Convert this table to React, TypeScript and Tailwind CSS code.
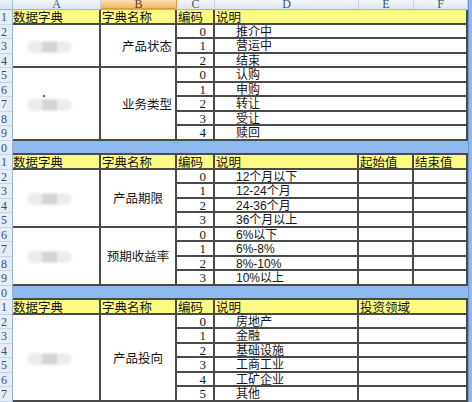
import React from 'react';

// Excel-like data dictionary sheet, cropped on the left

type Split = 'one' | 'two' | 'three';

type Group = {
  name: string;
  align: 'right' | 'center';
  blob: 'plain' | 'mark';
  items: string[];
};

type Section = {
  split: Split;
  groups: Group[];
};

const sections: Section[] = [
  {
    split: 'one',
    groups: [
      { name: '产品状态', align: 'right', blob: 'plain', items: ['推介中', '营运中', '结束'] },
      { name: '业务类型', align: 'right', blob: 'mark', items: ['认购', '申购', '转让', '受让', '赎回'] },
    ],
  },
  {
    split: 'three',
    groups: [
      { name: '产品期限', align: 'center', blob: 'plain', items: ['12个月以下', '12-24个月', '24-36个月', '36个月以上'] },
      { name: '预期收益率', align: 'center', blob: 'plain', items: ['6%以下', '6%-8%', '8%-10%', '10%以上'] },
    ],
  },
  {
    split: 'two',
    groups: [
      { name: '产品投向', align: 'center', blob: 'plain', items: ['房地产', '金融', '基础设施', '工商工业', '工矿企业', '其他'] },
    ],
  },
];

const cols = [
  { id: 'A', w: 'w-[88px]' },
  { id: 'B', w: 'w-[76px]' },
  { id: 'C', w: 'w-[38px]' },
  { id: 'D', w: 'w-[144px]' },
  { id: 'E', w: 'w-[55px]' },
  { id: 'F', w: 'w-[54px]' },
];

function ColumnHeader() {
  return (
    <div className="flex h-[10px] overflow-hidden border-b border-[#9fb5cf]">
      <div className="w-[13px] bg-gradient-to-b from-[#eef2f8] to-[#d8e2ef] border-r border-[#a9bdd6]" />
      {cols.map((c) => (
        <div
          key={c.id}
          className={`${c.w} flex justify-center overflow-hidden border-r border-[#c3d1e2] font-['Liberation_Serif',serif] text-[12px] leading-[8px] ${
            c.id === 'B'
              ? 'bg-gradient-to-b from-[#fbe0b0] to-[#f2b765] text-[#5a4020] border-b border-[#e39a3a]'
              : 'bg-gradient-to-b from-[#f4f7fb] to-[#dde6f2] text-[#3d5275]'
          }`}
        >
          {c.id}
        </div>
      ))}
    </div>
  );
}

function RowNumbers() {
  const nums = Array.from({ length: 27 }, (_, i) => (i + 1) % 10);
  return (
    <div className="w-[13px] flex flex-col border-r border-[#9fb5cf] bg-[#e6edf7]">
      {nums.map((n, i) => (
        <div
          key={i}
          className="h-[14.5px] border-b border-[#c6d4e6] overflow-hidden font-['Liberation_Serif',serif] text-[12px] leading-[14px] text-[#34507a] pl-[1px]"
        >
          {n}
        </div>
      ))}
    </div>
  );
}

function Blob({ mark }: { mark: boolean }) {
  return (
    <div className="relative w-[45px] h-[12px] ml-[14px] mt-[3px]">
      <div className="absolute inset-0 rounded-full bg-[#ececec] blur-[1.5px]" />
      <div className="absolute left-[15px] top-[1px] w-[15px] h-[10px] bg-[#d4d4d4] blur-[1px]" />
      {mark && <div className="absolute left-[16px] -top-[4px] w-[2px] h-[2px] rotate-45 bg-[#444] blur-[0.4px]" />}
    </div>
  );
}

function HeaderRow({ split }: { split: Split }) {
  const cell = 'h-full border-r-2 border-[#4a4a4a] pl-[1px] leading-[13px] overflow-hidden whitespace-nowrap';
  return (
    <div className="flex h-[14.5px] bg-[#fcfc84] border-b-2 border-[#4a4a4a] text-[12.5px]">
      <div className="w-[88px] h-full border-r-2 border-[#4a4a4a] leading-[13px]">数据字典</div>
      <div className={`w-[76px] ${cell}`}>字典名称</div>
      <div className={`w-[38px] ${cell}`}>编码</div>
      {split === 'one' && <div className={`w-[253px] ${cell}`}>说明</div>}
      {split !== 'one' && <div className={`w-[144px] ${cell}`}>说明</div>}
      {split === 'two' && <div className={`w-[109px] ${cell}`}>投资领域</div>}
      {split === 'three' && (
        <>
          <div className={`w-[55px] ${cell}`}>起始值</div>
          <div className={`w-[54px] ${cell}`}>结束值</div>
        </>
      )}
    </div>
  );
}

function DataRow({ code, text, split }: { code: number; text: string; split: Split }) {
  const cell = 'h-full border-r-2 border-b-2 border-[#4a4a4a]';
  return (
    <div className="flex h-[14.5px]">
      <div className={`w-[38px] ${cell} text-right pr-[7px] font-['Liberation_Serif',serif] text-[13px] leading-[13px]`}>
        {code}
      </div>
      <div
        className={`${split === 'one' ? 'w-[253px]' : 'w-[144px]'} ${cell} pl-[21px] font-['Liberation_Sans','Noto_Sans_CJK_SC',sans-serif] text-[12px] leading-[14px] whitespace-nowrap overflow-hidden`}
      >
        {text}
      </div>
      {split === 'two' && <div className={`w-[109px] ${cell}`} />}
      {split === 'three' && (
        <>
          <div className={`w-[55px] ${cell}`} />
          <div className={`w-[54px] ${cell}`} />
        </>
      )}
    </div>
  );
}

function GroupBlock({ group, split }: { group: Group; split: Split }) {
  return (
    <div className="flex">
      <div className="w-[88px] flex items-center border-b-2 border-r-2 border-[#4a4a4a]">
        <Blob mark={group.blob === 'mark'} />
      </div>
      <div
        className={`w-[76px] flex items-center pt-[2px] border-b-2 border-r-2 border-[#4a4a4a] text-[12.5px] ${
          group.align === 'right' ? 'justify-end pr-[3px]' : 'justify-center'
        }`}
      >
        {group.name}
      </div>
      <div className="flex flex-col">
        {group.items.map((t, i) => (
          <DataRow key={t} code={i} text={t} split={split} />
        ))}
      </div>
    </div>
  );
}

export default function App() {
  return (
    <div className="w-[472px] h-[402px] overflow-hidden bg-white flex font-['Noto_Sans_CJK_SC',sans-serif] text-[#151515]">
      <div className="w-[468px] flex flex-col">
        <ColumnHeader />
        <div className="flex">
          <RowNumbers />
          <div className="w-[455px] flex flex-col">
            {sections.map((s, si) => (
              <React.Fragment key={si}>
                {si > 0 && <div className="h-[14.5px] bg-[#8fbaf0] border-b-2 border-[#4a4a4a]" />}
                <HeaderRow split={s.split} />
                {s.groups.map((g) => (
                  <GroupBlock key={g.name} group={g} split={s.split} />
                ))}
              </React.Fragment>
            ))}
          </div>
        </div>
      </div>
      <div className="w-[4px] bg-[#8fbaf0] border-l border-[#6d95cc]" />
    </div>
  );
}
